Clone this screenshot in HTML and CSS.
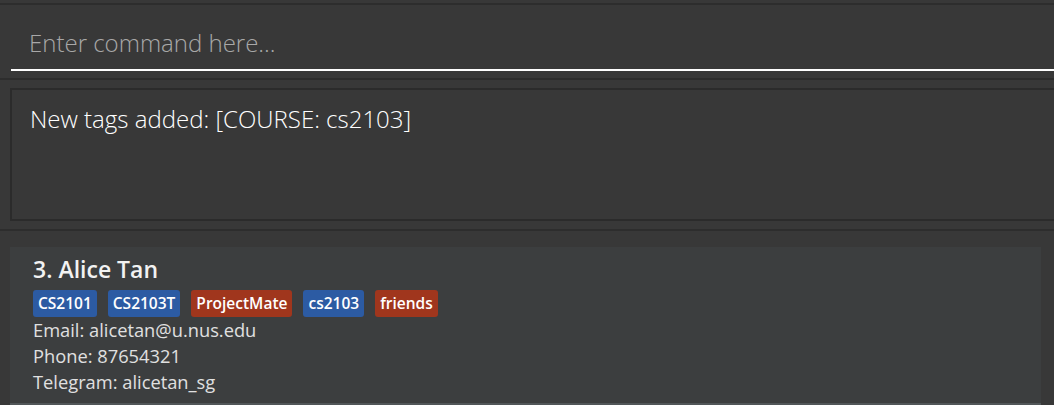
FILE: index.html
```html
<!DOCTYPE html>
<html lang="en">
<head>
<meta charset="utf-8">
<title>Address Book</title>
<link rel="stylesheet" href="styles.css">
</head>
<body>
<div class="app">
  <section class="command-pane">
    <div class="command-box">
      <input class="command-input" type="text" placeholder="Enter command here...">
    </div>
  </section>
  <section class="result-pane">
    <div class="result-box">New tags added: [COURSE: cs2103]</div>
  </section>
  <section class="list-pane">
    <div class="card">
      <div class="name">3. Alice Tan</div>
      <div class="tags">
        <span class="tag tag-blue">CS2101</span>
        <span class="tag tag-blue">CS2103T</span>
        <span class="tag tag-red">ProjectMate</span>
        <span class="tag tag-blue">cs2103</span>
        <span class="tag tag-red">friends</span>
      </div>
      <div class="detail">Email: alicetan@u.nus.edu</div>
      <div class="detail">Phone: 87654321</div>
      <div class="detail">Telegram: alicetan_sg</div>
    </div>
    <div class="card card-odd"></div>
  </section>
</div>
</body>
</html>
```

FILE: styles.css
```css
html, body {
  margin: 0;
  padding: 0;
  background: #383838;
  overflow: hidden;
}

.app {
  width: 1054px;
  height: 405px;
  overflow: hidden;
  font-family: "Open Sans", "Noto Sans", sans-serif;
  background: #383838;
}

.command-pane {
  margin-top: 3px;
  border-top: 2px solid #2d2d2d;
  border-bottom: 2px solid #2d2d2d;
  height: 77px;
  box-sizing: border-box;
}

.command-box {
  margin-left: 11px;
  height: 66px;
  box-sizing: border-box;
  border-bottom: 2px solid #ffffff;
  padding-top: 22px;
}

.command-input {
  display: block;
  width: 100%;
  height: 32px;
  box-sizing: border-box;
  background: transparent;
  border: none;
  outline: none;
  padding: 0 0 0 18px;
  margin: 0;
  font-family: "Open Sans", "Noto Sans", sans-serif;
  font-weight: 300;
  font-size: 24px;
  line-height: 32px;
  color: #ffffff;
}

.command-input::placeholder {
  color: #a8a8a8;
  opacity: 1;
}

.result-pane {
  padding-top: 8px;
  height: 151px;
  box-sizing: border-box;
  border-bottom: 2px solid #2d2d2d;
}

.result-box {
  margin-left: 10px;
  height: 133px;
  box-sizing: border-box;
  border: 2px solid #2b2b2b;
  border-right: none;
  padding: 13px 0 0 18px;
  font-weight: 300;
  font-size: 24px;
  line-height: 32px;
  color: #ffffff;
}

.list-pane {
  padding-top: 16px;
}

.card {
  margin-left: 10px;
  width: 1031px;
  background: #3c3e3f;
  padding: 8px 0 0 23px;
  box-sizing: border-box;
  height: 156px;
}

.card-odd {
  background: #515658;
  height: 40px;
}

.name {
  font-size: 23px;
  font-weight: 600;
  color: #f2f2f2;
  line-height: 28px;
}

.tags {
  display: flex;
  gap: 11px;
  margin-top: 7px;
}

.tag {
  height: 27px;
  box-sizing: border-box;
  padding: 0 5px;
  border-radius: 3px;
  font-size: 15.5px;
  font-weight: 600;
  color: #ffffff;
  line-height: 27px;
}

.tag-blue {
  background: #2c5ba3;
}

.tag-red {
  background: #a0361d;
}

.detail {
  font-size: 18.3px;
  color: #e0e0e0;
  line-height: 26px;
}
```
